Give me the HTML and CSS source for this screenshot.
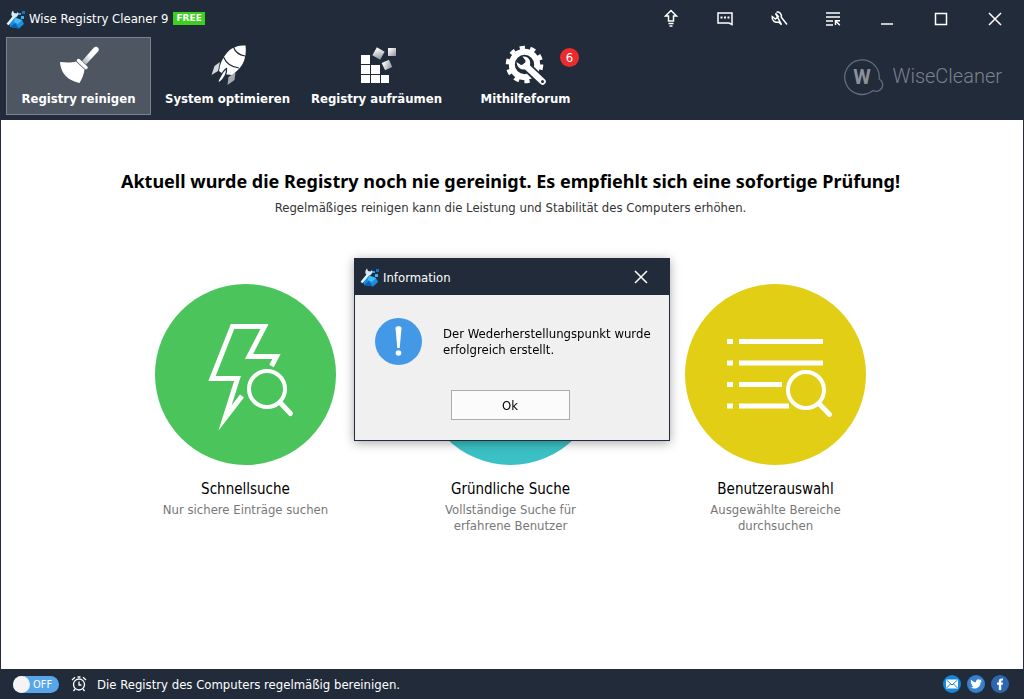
FILE: index.html
```html
<!DOCTYPE html>
<html lang="de">
<head>
    <meta charset="UTF-8">
    <meta name="viewport" content="width=device-width, initial-scale=1">
    <title>Wise Registry Cleaner 9</title>
    <link rel="stylesheet" href="styles.css">
</head>
<body>
    <!-- shared symbols -->
    <svg class="symbols" width="0" height="0" aria-hidden="true">
        <symbol id="app-logo" viewBox="0 0 20 20">
            <path d="M3 12 L9 8 L16 11 L18 15 L13 19.500 L4 18 Z" fill="#1c8fe0"/>
            <path d="M4 18 L9 14 L13 19.500 Z" fill="#0b62b8"/>
            <path d="M9 9 L16 11 L12 15 L8 13 Z" fill="#45bdf5"/>
            <rect x="12" y="4" width="3" height="2" fill="#2aa7f0"/>
            <rect x="16" y="2" width="3" height="3" fill="#1573c4"/>
            <rect x="15" y="7" width="3" height="3" fill="#35b3f5"/>
            <path d="M1.500 15.500 L8.500 7" stroke="#e8f4fc" stroke-width="2.500"/>
            <path d="M7 1.500 L8 4 L10.500 4.500 L12 3 C13 6 11 9 8 8.500 C5 8 4.500 4 7 1.500 Z" fill="#d6ecfa"/>
        </symbol>
        <symbol id="magnifier" viewBox="0 0 48 50">
            <circle cx="20" cy="20" r="18" fill="none" stroke="#fff" stroke-width="4"/>
            <path d="M33.500 34 L43.500 44.500" stroke="#fff" stroke-width="5" stroke-linecap="round"/>
        </symbol>
    </svg>

    <div class="window">
        <header class="header">
            <div class="titlebar">
                <svg class="app-logo"><use href="#app-logo"/></svg>
                <span class="app-name">Wise Registry Cleaner 9</span>
                <span class="free">FREE</span>
                <div class="window-buttons">
                    <button type="button" aria-label="Upgrade">
                        <svg viewBox="0 0 20 20"><path d="M10 1.500 L15.500 7 H12.500 V12 H7.500 V7 H4.500 Z M7.500 14.500 H12.500 M8.500 17 H11.500"/></svg>
                    </button>
                    <button type="button" aria-label="Feedback">
                        <svg viewBox="0 0 20 20"><path d="M3 4 H17 V15.500 L14 14 H3 Z"/><path d="M5.500 8.500 H7.500 M9 8.500 H11 M12.500 8.500 H14.500" stroke-width="2"/></svg>
                    </button>
                    <button type="button" aria-label="Einstellungen">
                        <svg viewBox="0 0 20 20"><path d="M7.500 3.200 C10.500 2.500 13 5 12.300 8.300 L18 15.500 M12.500 15.700 L9.500 13 C6 14 2.500 11.500 3.200 7.500 L6.500 10 L9.300 7.500 L6.500 4.300 Z"/></svg>
                    </button>
                    <button type="button" aria-label="Menü">
                        <svg viewBox="0 0 20 20"><path d="M3 4 H17 M3 8 H17 M3 12 H10 M3 16 H10"/><path d="M12.500 16 V11.800 H17 M12.500 11.800 L16.800 16.200"/></svg>
                    </button>
                    <button type="button" aria-label="Minimieren">
                        <svg viewBox="0 0 20 20"><path d="M4 15 H16"/></svg>
                    </button>
                    <button type="button" aria-label="Maximieren">
                        <svg viewBox="0 0 20 20"><rect x="4.500" y="4.500" width="11" height="11"/></svg>
                    </button>
                    <button type="button" aria-label="Schließen">
                        <svg viewBox="0 0 20 20"><path d="M4 4 L16 16 M16 4 L4 16"/></svg>
                    </button>
                </div>
            </div>

            <div class="toolbar">
                <nav class="tabs">
                    <button type="button" class="tab active">
                        <svg viewBox="0 0 44 44">
                            <defs>
                                <linearGradient id="handle" x1="1" y1="0" x2="0" y2="1">
                                    <stop offset="0.500" stop-color="#fff"/>
                                    <stop offset="1" stop-color="#9a9ea6"/>
                                </linearGradient>
                            </defs>
                            <path d="M25 17 L37 3.500 C39.500 1 43.500 4.500 41 7.500 L29 20.500 Z" fill="url(#handle)"/>
                            <path d="M21.500 16.500 L29 23.500" stroke="#fff" stroke-width="3.500" stroke-linecap="round"/>
                            <path d="M3 18 C8 18.500 14 19 19 17.500 L27.500 25.500 C27 30 25 35 22.500 39 C14 37 4 32 3 18 Z" fill="#fff"/>
                        </svg>
                        <span>Registry reinigen</span>
                    </button>
                    <button type="button" class="tab">
                        <svg viewBox="0 0 44 44">
                            <path d="M14 18 L8.500 22 L5.500 31 L12 27 Z" fill="#d5d7da"/>
                            <path d="M22.500 33 L29.500 28.500 L28.500 36 L21.500 41 Z" fill="#a5a9b0"/>
                            <path d="M39.500 1.500 C32 1.500 25 3 20 10 C16 15 14 20 13 27 L17 30 L26 31 C33 26 38 20 39 13 C40 9 40 5 39.500 1.500 Z" fill="#fff"/>
                            <path d="M27.500 3 C29 7.500 33 11 39 12 M17.500 13 C20 19 25 23 33 24" fill="none" stroke="#222c3b" stroke-width="1.200"/>
                            <path d="M20.500 24.500 C16 27 14.500 33 11 38.500 L14 38 C19 34 21 30 20.500 24.500 Z" fill="#fff" stroke="#222c3b" stroke-width="1.300"/>
                        </svg>
                        <span>System optimieren</span>
                    </button>
                    <button type="button" class="tab">
                        <svg viewBox="0 0 44 44">
                            <defs>
                                <linearGradient id="block" x1="1" y1="1" x2="0" y2="0">
                                    <stop offset="0" stop-color="#8b9099"/>
                                    <stop offset="0.800" stop-color="#f2f2f3"/>
                                </linearGradient>
                            </defs>
                            <path d="M6 11h9v9H6z M6 21h9v9H6z M16 21h9v9h-9z M6 31h9v8H6z M16 31h9v8h-9z M26 31h8v8h-8z" fill="#fff"/>
                            <rect x="19" y="5" width="9" height="9" transform="rotate(30 23.500 9.500)" fill="url(#block)"/>
                            <rect x="33" y="4" width="8" height="8" fill="url(#block)"/>
                            <rect x="28" y="17" width="8" height="8" transform="rotate(-25 32 21)" fill="url(#block)"/>
                        </svg>
                        <span>Registry aufräumen</span>
                    </button>
                    <button type="button" class="tab">
                        <svg viewBox="0 0 44 44">
                            <circle cx="20.500" cy="20.500" r="12.700" fill="none" stroke="#fff" stroke-width="6"/>
                            <circle cx="20.500" cy="20.500" r="16.800" fill="none" stroke="#fff" stroke-width="4" stroke-dasharray="5.200 5.356"/>
                            <path d="M21 21 L38.500 38" stroke="#222c3b" stroke-width="10" stroke-linecap="round"/>
                            <path d="M22 22 L38.500 37.500" stroke="#fff" stroke-width="6.500" stroke-linecap="round"/>
                            <path d="M18.500 12.500 C24 11.500 28 17 25.500 22 C23 27 15 27 13 20.500 L12.500 18 L17 21 L21 20 L21.500 16.500 Z" fill="#fff"/>
                            <circle cx="38.500" cy="37.500" r="1.500" fill="#222c3b"/>
                        </svg>
                        <span>Mithilfeforum</span>
                        <span class="badge">6</span>
                    </button>
                </nav>
                <div class="brand">
                    <svg viewBox="0 0 44 40">
                        <path d="M36.200 23 A17.300 17.300 0 1 0 30 34.500 A6.500 6.500 0 1 0 36.200 23 Z"/>
                        <text x="19" y="28" text-anchor="middle">W</text>
                    </svg>
                    <span>WiseCleaner</span>
                </div>
            </div>
        </header>

        <main class="content">
            <h1>Aktuell wurde die Registry noch nie gereinigt. Es empfiehlt sich eine sofortige Prüfung!</h1>
            <p class="subtitle">Regelmäßiges reinigen kann die Leistung und Stabilität des Computers erhöhen.</p>

            <div class="scans">
                <button type="button" class="scan">
                    <svg class="circle green" viewBox="0 0 181 181">
                        <path d="M116.500 82 L121.500 72.500 H94 L109.500 42.500 H77.500 L57 94.500 H82.500 L70 134 L87 112" class="line"/>
                        <use href="#magnifier" x="92" y="85" width="48" height="50"/>
                    </svg>
                    <span class="scan-title">Schnellsuche</span>
                    <span class="scan-text">Nur sichere Einträge suchen</span>
                </button>
                <button type="button" class="scan">
                    <svg class="circle teal" viewBox="0 0 181 181">
                        <use href="#magnifier" x="66" y="64" width="48" height="50"/>
                    </svg>
                    <span class="scan-title">Gründliche Suche</span>
                    <span class="scan-text">Vollständige Suche für<br>erfahrene Benutzer</span>
                </button>
                <button type="button" class="scan">
                    <svg class="circle yellow" viewBox="0 0 181 181">
                        <path d="M42 57.500 h6 M54 57.500 h84 M42 79 h6 M54 79 h84 M42 100.500 h6 M54 100.500 h43 M42 122 h6 M54 122 h50" class="line"/>
                        <use href="#magnifier" x="101" y="86" width="48" height="50"/>
                    </svg>
                    <span class="scan-title">Benutzerauswahl</span>
                    <span class="scan-text">Ausgewählte Bereiche<br>durchsuchen</span>
                </button>
            </div>
        </main>

        <footer class="footer">
            <label class="toggle"><input type="checkbox"><span>OFF</span></label>
            <svg class="clock" viewBox="0 0 16 16"><circle cx="8" cy="8.500" r="5.500"/><path d="M8 5.500 V9 H10.500 M1 4 L4 1.200 M15 4 L12 1.200 M6.500 1 H9.500 M4 13 L2.500 15 M12 13 L13.500 15"/></svg>
            <span>Die Registry des Computers regelmäßig bereinigen.</span>
            <div class="social">
                <a href="#" aria-label="E-Mail">
                    <svg viewBox="0 0 18 18"><circle cx="9" cy="9" r="9" fill="#1787d8"/><path d="M3 4.500 H15 V13.500 H3 Z" fill="#fff"/><path d="M3.500 5 L9 10 L14.500 5 M3.500 13 L7.500 9 M14.500 13 L10.500 9" fill="none" stroke="#1787d8"/></svg>
                </a>
                <a href="#" aria-label="Twitter">
                    <svg viewBox="0 0 18 18"><circle cx="9" cy="9" r="9" fill="#3580cf"/><path d="M4 4.800 C5.500 6.500 7 7.200 9 7.200 C8.800 4.300 11.800 3.600 13 5 L14.600 4.500 L13.900 6 L14.800 6 L13.600 7.200 C13.500 12.500 8.500 15 3.500 12.600 C5 12.600 6 12.300 6.800 11.600 C5.600 11.400 4.900 10.800 4.600 9.900 H5.500 C4.200 9.200 3.700 8.400 3.700 7.300 L4.600 7.500 C3.700 6.700 3.600 5.700 4 4.800 Z" fill="#fff"/></svg>
                </a>
                <a href="#" aria-label="Facebook">
                    <svg viewBox="0 0 18 18"><circle cx="9" cy="9" r="9" fill="#2f66b0"/><path d="M7.800 15 V9.800 H6 V7.500 H7.800 V6 C7.800 4 9 3.200 12 3.500 V5.500 C10.500 5.400 10.200 5.700 10.200 6.500 V7.500 H12 L11.700 9.800 H10.200 V15 Z" fill="#fff"/></svg>
                </a>
            </div>
        </footer>
    </div>

    <div class="overlay">
        <div class="dialog" role="dialog" aria-labelledby="dialog-title">
            <div class="dialog-header">
                <svg class="app-logo"><use href="#app-logo"/></svg>
                <span id="dialog-title">Information</span>
                <button type="button" aria-label="Schließen">
                    <svg viewBox="0 0 20 20"><path d="M4 4 L16 16 M16 4 L4 16"/></svg>
                </button>
            </div>
            <div class="dialog-body">
                <div class="message">
                    <svg viewBox="0 0 47 47">
                        <circle cx="23.500" cy="23.500" r="23.500" fill="#4499e6"/>
                        <path d="M20.500 10 C20.500 7.500 26.500 7.500 26.500 10 L24.700 30 H22.300 Z" fill="#fff"/>
                        <circle cx="23.500" cy="35" r="2.800" fill="#fff"/>
                    </svg>
                    <p>Der Wederherstellungspunkt wurde erfolgreich erstellt.</p>
                </div>
                <button type="button" class="ok">Ok</button>
            </div>
        </div>
    </div>
</body>
</html>
```
FILE: styles.css
```css
* {
    box-sizing: border-box;
}
body {
    margin: 0;
    font-family: Tahoma, "DejaVu Sans Condensed", sans-serif;
    font-size: 13px;
    color: #000;
}
button {
    font: inherit;
    color: inherit;
    background: none;
    border: none;
    padding: 0;
    cursor: pointer;
}
.symbols {
    position: absolute;
}
.window {
    display: flex;
    flex-direction: column;
    min-height: 100vh;
    background-color: #212b3a;
}

/* header */
.header {
    color: #fff;
    padding-bottom: 5px;
}
.titlebar {
    display: flex;
    align-items: center;
    height: 37px;
    padding-left: 6px;
}
.app-logo {
    width: 20px;
    height: 20px;
    margin-right: 3px;
}
.free {
    margin-left: 5px;
    padding: 0 3px;
    font: bold 9px/13px "DejaVu Sans", Verdana, sans-serif;
    background-color: #3ccf1e;
}
.window-buttons {
    display: flex;
    margin-left: auto;
    padding-right: 2px;
}
.window-buttons button {
    display: flex;
    align-items: center;
    justify-content: center;
    width: 54px;
    height: 36px;
}
.window-buttons svg,
.dialog-header button svg {
    width: 20px;
    height: 20px;
    fill: none;
    stroke: #fff;
    stroke-width: 1.5;
}
.toolbar {
    display: flex;
    align-items: center;
    justify-content: space-between;
    padding: 0 22px 0 6px;
}
.tabs {
    display: flex;
    gap: 4px;
}
.tab {
    position: relative;
    display: flex;
    flex-direction: column;
    align-items: center;
    width: 145px;
    height: 78px;
    padding-top: 6px;
    font-weight: bold;
    line-height: 18px;
    white-space: nowrap;
    border: 1px solid transparent;
}
.tab.active {
    background-color: #4e5661;
    border-color: #7d838c;
}
.tab svg {
    width: 44px;
    height: 44px;
    margin-bottom: 2px;
}
.badge {
    position: absolute;
    top: 10px;
    right: 18px;
    width: 19px;
    font-weight: normal;
    line-height: 19px;
    text-align: center;
    background-color: #ec2b2f;
    border-radius: 50%;
}
.brand {
    display: flex;
    align-items: center;
    gap: 5px;
    font: 300 20px Roboto, "Liberation Sans", sans-serif;
    color: #7c828c;
}
.brand svg {
    width: 44px;
    height: 40px;
    fill: none;
    stroke: #656c78;
    stroke-width: 1.3;
}
.brand text {
    font-weight: bold;
    fill: #8c919a;
    stroke: none;
}

/* content */
.content {
    flex: 1;
    margin: 0 1px;
    padding: 49px 3px 40px 0;
    text-align: center;
    background-color: #fff;
}
h1 {
    margin: 0;
    font-family: Tahoma, "Noto Sans", sans-serif;
    font-size: 18px;
    line-height: 24px;
}
.subtitle {
    margin: 7px 0 0;
    line-height: 16px;
    color: #333;
}
.scans {
    display: grid;
    grid-template-columns: repeat(3, 265px);
    justify-content: center;
    align-items: start;
    margin-top: 68px;
}
.scan {
    display: flex;
    flex-direction: column;
    align-items: center;
}
.circle {
    width: 181px;
    height: 181px;
    border-radius: 50%;
}
.green {
    background-color: #4ac45b;
}
.teal {
    background-color: #3bc1c5;
}
.yellow {
    background-color: #e2ce15;
}
.line {
    fill: none;
    stroke: #fff;
    stroke-width: 5;
    stroke-miterlimit: 8;
}
.scan-title {
    margin-top: 14px;
    font-size: 15px;
    line-height: 20px;
}
.scan-text {
    margin-top: 3px;
    line-height: 16px;
    color: #777;
}

/* footer */
.footer {
    display: flex;
    align-items: center;
    height: 30px;
    padding: 0 15px 0 13px;
    color: #fff;
}
.toggle {
    display: flex;
    align-items: center;
    gap: 3px;
    width: 46px;
    height: 17px;
    font-size: 11px;
    background-color: #58a6ea;
    border-radius: 9px;
}
.toggle input {
    appearance: none;
    width: 17px;
    height: 17px;
    margin: 0;
    background-color: #f4f4f4;
    border-radius: 50%;
}
.clock {
    width: 16px;
    height: 16px;
    margin: 0 10px 0 12px;
    fill: none;
    stroke: #fff;
    stroke-width: 1.3;
}
.social {
    display: flex;
    gap: 6px;
    margin-left: auto;
}
.social a,
.social svg {
    display: block;
    width: 18px;
    height: 18px;
}

/* dialog */
.overlay {
    position: fixed;
    inset: 0;
    display: grid;
    place-items: center;
}
.dialog {
    width: 316px;
    background-color: #f0f0f0;
    border: 1px solid #212b3a;
    box-shadow: 0 2px 10px rgba(0, 0, 0, 0.35);
}
.dialog-header {
    display: flex;
    align-items: center;
    height: 36px;
    padding: 0 18px 0 5px;
    color: #fff;
    background-color: #212b3a;
}
.dialog-header button {
    display: flex;
    margin-left: auto;
}
.dialog-body {
    display: flex;
    flex-direction: column;
    align-items: center;
    padding-bottom: 20px;
}
.message {
    display: flex;
    align-items: center;
    gap: 21px;
    padding: 23px 8px 25px 20px;
}
.message svg {
    flex: none;
    width: 47px;
    height: 47px;
}
.message p {
    margin: 0;
    line-height: 16px;
}
.ok {
    width: 119px;
    height: 30px;
    margin-right: 4px;
    background-color: #fbfbfb;
    border: 1px solid #adadad;
}
```
